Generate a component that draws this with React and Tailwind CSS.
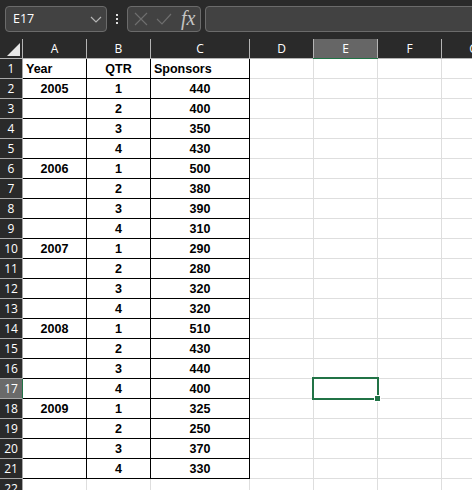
import React from "react";

const columns = [
  { label: "A", w: "w-[64px]" },
  { label: "B", w: "w-[64px]" },
  { label: "C", w: "w-[99px]" },
  { label: "D", w: "w-[64px]" },
  { label: "E", w: "w-[64px]", selected: true },
  { label: "F", w: "w-[64px]" },
  { label: "G", w: "w-[64px]" },
];

const rows = [
  ["Year", "QTR", "Sponsors"],
  ["2005", "1", "440"],
  ["", "2", "400"],
  ["", "3", "350"],
  ["", "4", "430"],
  ["2006", "1", "500"],
  ["", "2", "380"],
  ["", "3", "390"],
  ["", "4", "310"],
  ["2007", "1", "290"],
  ["", "2", "280"],
  ["", "3", "320"],
  ["", "4", "320"],
  ["2008", "1", "510"],
  ["", "2", "430"],
  ["", "3", "440"],
  ["", "4", "400"],
  ["2009", "1", "325"],
  ["", "2", "250"],
  ["", "3", "370"],
  ["", "4", "330"],
  null,
];

const ui = "font-['Open_Sans','Noto_Sans',sans-serif]";

function Toolbar() {
  return (
    <div className="h-[39px] flex items-start pt-[6px] pl-[5px] bg-[#2a2a2a] shrink-0">
      <div className="w-[102px] h-[26px] shrink-0 rounded-[4px] border border-[#6b6b6b] bg-[#424242] flex items-center justify-between pl-[7px] pr-[4px]">
        <span className={`${ui} text-[12.5px] text-white`}>E17</span>
        <svg width="12" height="12" viewBox="0 0 12 12" fill="none" stroke="#b5b5b5" strokeWidth="1.2">
          <path d="M1 4 L6 9 L11 4" />
        </svg>
      </div>
      <div className="w-[20px] h-[26px] shrink-0 flex flex-col items-center justify-center gap-[2px]">
        <span className="w-[2px] h-[2px] bg-[#e0e0e0]" />
        <span className="w-[2px] h-[2px] bg-[#e0e0e0]" />
        <span className="w-[2px] h-[2px] bg-[#e0e0e0]" />
      </div>
      <div className="w-[74px] h-[26px] shrink-0 rounded-[4px] border border-[#6b6b6b] bg-[#424242] flex items-center pl-[6px] gap-[8px]">
        <svg width="14" height="14" viewBox="0 0 14 14" fill="none" stroke="#6e6e6e" strokeWidth="1.2">
          <path d="M1 1 L13 13 M13 1 L1 13" />
        </svg>
        <svg width="16" height="14" viewBox="0 0 16 14" fill="none" stroke="#6e6e6e" strokeWidth="1.2">
          <path d="M1 7 L6 12 L15 2" />
        </svg>
        <span className="font-['Liberation_Serif',serif] italic text-[20px] leading-none text-[#c4c4c4] ml-[1px] pb-[2px]">fx</span>
      </div>
      <div className="ml-[4px] w-[280px] h-[26px] shrink-0 rounded-[4px] border border-[#6b6b6b] bg-[#424242]" />
    </div>
  );
}

function ColumnHeaders() {
  return (
    <div className="h-[20px] flex bg-[#2a2a2a] shrink-0 border-b border-[#b4b4b4]">
      <div className="w-[23px] shrink-0 border-r border-[#b4b4b4] relative">
        <svg className="absolute right-[2px] bottom-[2px]" width="13" height="13" viewBox="0 0 13 13">
          <path d="M13 0 V13 H0 Z" fill="#e8e8e8" />
        </svg>
      </div>
      {columns.map((c) => (
        <div
          key={c.label}
          className={`${c.w} shrink-0 h-[19px] flex items-center justify-center border-r border-[#b4b4b4] ${ui} text-[12px] text-white ${
            c.selected ? "bg-[#666666] relative" : ""
          }`}
        >
          {c.label}
          {c.selected && <span className="absolute left-[-1px] right-[-1px] bottom-[-1px] h-[1px] bg-[#217346]" />}
        </div>
      ))}
    </div>
  );
}

function Row({ index, data }) {
  const selected = index === 17;
  return (
    <div className="h-[20px] flex shrink-0">
      <div
        className={`w-[23px] shrink-0 flex items-center justify-center pt-[1px] border-b border-r ${
          selected ? "bg-[#6a6a6a] border-r-[#217346] border-b-[#a8a8a8]" : "bg-[#2a2a2a] border-[#a8a8a8]"
        } ${ui} text-[12px] text-white`}
      >
        {index}
      </div>
      {columns.map((c, i) => {
        const filled = data && i < 3;
        const header = index === 1 && (i === 0 || i === 2);
        const align = header ? "justify-start pl-[3px]" : "justify-center";
        return (
          <div
            key={c.label}
            className={`${c.w} shrink-0 flex items-center pt-[1px] ${align} border-b border-r ${
              filled ? "border-black" : "border-[#dedede]"
            } font-['Liberation_Sans',Arial,sans-serif] font-bold text-[12.5px] text-black`}
          >
            {filled ? data[i] : ""}
          </div>
        );
      })}
    </div>
  );
}

export default function App() {
  return (
    <div className="w-[472px] h-[490px] overflow-hidden bg-white flex flex-col">
      <Toolbar />
      <ColumnHeaders />
      <div className="relative flex flex-col">
        {rows.map((data, i) => (
          <Row key={i} index={i + 1} data={data} />
        ))}
        <div className="absolute left-[312px] top-[318px] w-[67px] h-[23px] border-2 border-[#217346]" />
        <div className="absolute left-[374px] top-[336px] w-[5px] h-[5px] bg-[#217346] border border-white box-content" />
      </div>
    </div>
  );
}
